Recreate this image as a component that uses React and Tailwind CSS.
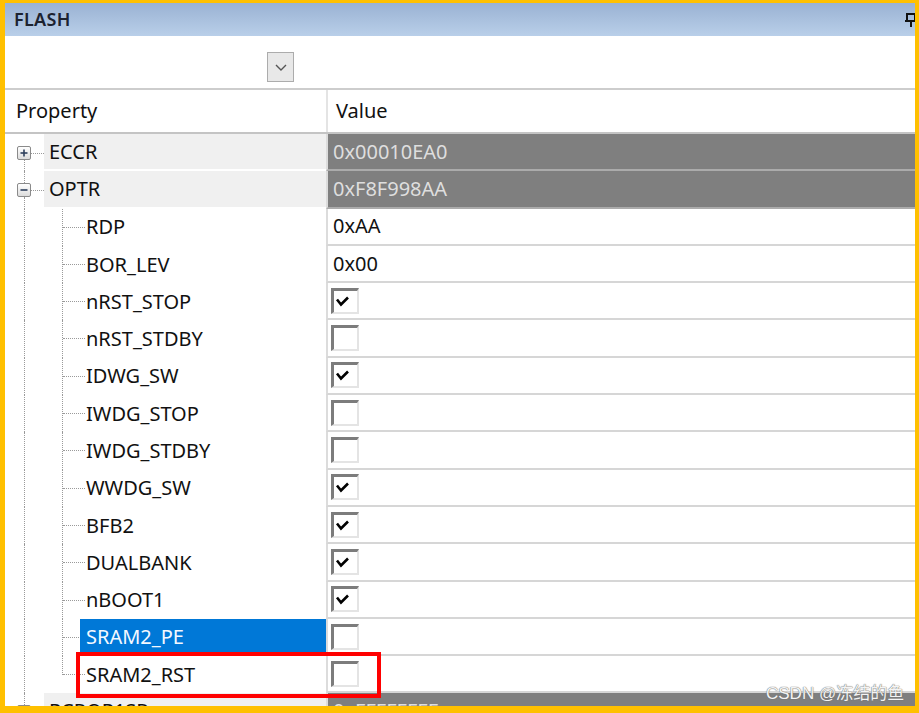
import React from "react";

const rows = [
  { name: "RDP", value: "0xAA" },
  { name: "BOR_LEV", value: "0x00" },
  { name: "nRST_STOP", check: true },
  { name: "nRST_STDBY", check: false },
  { name: "IDWG_SW", check: true },
  { name: "IWDG_STOP", check: false },
  { name: "IWDG_STDBY", check: false },
  { name: "WWDG_SW", check: true },
  { name: "BFB2", check: true },
  { name: "DUALBANK", check: true },
  { name: "nBOOT1", check: true },
  { name: "SRAM2_PE", check: false, selected: true },
  { name: "SRAM2_RST", check: false, last: true },
];

function Expander({ open }) {
  return (
    <div className="w-[14px] h-[14px] border border-[#8a8a8a] rounded-[2px] bg-gradient-to-b from-white to-[#dcdcdc] flex items-center justify-center">
      <svg width="10" height="10" viewBox="0 0 10 10">
        <line x1="1.5" y1="5" x2="8.5" y2="5" stroke="#2d3f5c" strokeWidth="1.6" />
        {!open && <line x1="5" y1="1.5" x2="5" y2="8.5" stroke="#2d3f5c" strokeWidth="1.6" />}
      </svg>
    </div>
  );
}

function Check({ checked }) {
  return (
    <div className="w-[28px] h-[26px] border-t-[3px] border-l-[3px] border-t-[#7c7c7c] border-l-[#7c7c7c] border-r-2 border-b-2 border-r-[#e4e4e4] border-b-[#e4e4e4] bg-white">
      {checked && (
        <svg width="20" height="18" viewBox="0 0 20 18" className="block">
          <path d="M3 8.5 L7 13.5 L14 6.5" fill="none" stroke="#000" strokeWidth="2.6" strokeLinejoin="miter" strokeLinecap="butt" />
        </svg>
      )}
    </div>
  );
}

function ParentRow({ name, value, open, first, last }) {
  return (
    <div className="flex h-[37.3px] shrink-0">
      <div className="relative w-[321px] shrink-0 flex">
        {!first && (
          <div className="absolute left-[19px] top-0 h-[12px] border-l border-dotted border-[#9a9a9a]" />
        )}
        {!last && (
          <div className="absolute left-[19px] top-[26px] bottom-0 border-l border-dotted border-[#9a9a9a]" />
        )}
        <div className="absolute left-[26px] top-[19px] w-[13px] border-t border-dotted border-[#9a9a9a]" />
        <div className="absolute left-[12px] top-[12px]">
          <Expander open={open} />
        </div>
        <div className="ml-[39px] mb-[2px] flex-1 bg-[#f0f0f0] pl-[5px] flex items-center text-[20px] text-[#111]">
          {name}
        </div>
      </div>
      <div className="flex-1 border-l-2 border-l-[#dcdcdc] border-b-2 border-b-[#ababab] bg-[#7f7f7f] pl-[5px] flex items-center text-[20px] text-[#dedede]">
        {value}
      </div>
    </div>
  );
}

function ChildRow({ row }) {
  return (
    <div className="flex h-[37.3px] shrink-0">
      <div className="relative w-[321px] shrink-0 flex">
        <div className="absolute left-[19px] top-0 bottom-0 border-l border-dotted border-[#9a9a9a]" />
        <div
          className={
            row.last
              ? "absolute left-[57px] top-0 h-[19px] border-l border-dotted border-[#9a9a9a]"
              : "absolute left-[57px] top-0 bottom-0 border-l border-dotted border-[#9a9a9a]"
          }
        />
        <div className="absolute left-[58px] top-[18px] w-[22px] border-t border-dotted border-[#9a9a9a]" />
        <div
          className={
            row.selected
              ? "relative ml-[75px] mb-[1px] flex-1 bg-[#0078d7] pl-[6px] flex items-center text-[20px] text-[#f4f8ff]"
              : "relative ml-[75px] flex-1 pl-[6px] flex items-center text-[20px] text-[#111]"
          }
        >
          {row.name}
        </div>
      </div>
      <div className="flex-1 border-l-2 border-l-[#dcdcdc] border-b-2 border-b-[#d6d6d6] bg-white pl-[3px] flex items-center text-[20px] text-[#111]">
        {row.check === undefined ? (
          <span className="pl-[2px]">{row.value}</span>
        ) : (
          <Check checked={row.check} />
        )}
      </div>
    </div>
  );
}

export default function App() {
  return (
    <div
      className="relative w-[919px] h-[713px] bg-[#ffc000] pt-[3px] pl-[5px] pr-[4px] pb-[7px] overflow-hidden"
      style={{ fontFamily: '"Noto Sans", "Open Sans", sans-serif' }}
    >
      <div className="h-full bg-white flex flex-col overflow-hidden">
        {/* title bar */}
        <div className="h-[33px] shrink-0 bg-gradient-to-b from-[#9ab2d3] to-[#b9cfe9] flex items-center justify-between pl-[9px]">
          <span className="text-[18px] font-semibold text-[#1c2230] tracking-[0.3px]">FLASH</span>
          <svg width="12" height="16" viewBox="0 0 12 16" className="mr-[-2px] mt-[1px]">
            <rect x="2" y="2" width="8" height="7" fill="none" stroke="#111" strokeWidth="2" />
            <line x1="0" y1="9" x2="12" y2="9" stroke="#111" strokeWidth="2" />
            <line x1="6" y1="9" x2="6" y2="15" stroke="#111" strokeWidth="2" />
          </svg>
        </div>
        {/* toolbar */}
        <div className="h-[52px] shrink-0 pl-[262px] pt-[16px]">
          <div className="w-[27px] h-[30px] border border-[#acacac] bg-[#e8e8e8] flex items-center justify-center">
            <svg width="14" height="10" viewBox="0 0 14 10">
              <path d="M2 3 L7 8 L12 3" fill="none" stroke="#555" strokeWidth="1.4" />
            </svg>
          </div>
        </div>
        <div className="h-[2px] shrink-0 bg-[#cdcdcd]" />
        {/* header */}
        <div className="h-[42px] shrink-0 flex text-[20px] text-[#111]">
          <div className="w-[321px] shrink-0 pl-[11px] flex items-center">Property</div>
          <div className="flex-1 border-l-2 border-[#e4e4e4] pl-[8px] flex items-center">Value</div>
        </div>
        <div className="h-[2px] shrink-0 bg-[#c4c4c4]" />
        {/* rows */}
        <ParentRow name="ECCR" value="0x00010EA0" open={false} first />
        <ParentRow name="OPTR" value="0xF8F998AA" open />
        {rows.map((r) => (
          <ChildRow key={r.name} row={r} />
        ))}
        <ParentRow name="PCROP1SR" value="0xFFFFFFFF" open={false} />
      </div>

      {/* red annotation box */}
      <div className="absolute left-[76px] top-[652px] w-[305px] h-[46px] border-[4px] border-[#ff0000]" />

      {/* watermark */}
      <div
        className="absolute left-[766px] top-[681px] text-[17px] text-[#f4f4f4] [text-shadow:0_0_1px_#6e6e6e,0_0_1px_#6e6e6e]"
        style={{ fontFamily: '"Liberation Sans", "Noto Sans CJK SC", sans-serif' }}
      >
        CSDN @冻结的鱼
      </div>
    </div>
  );
}
